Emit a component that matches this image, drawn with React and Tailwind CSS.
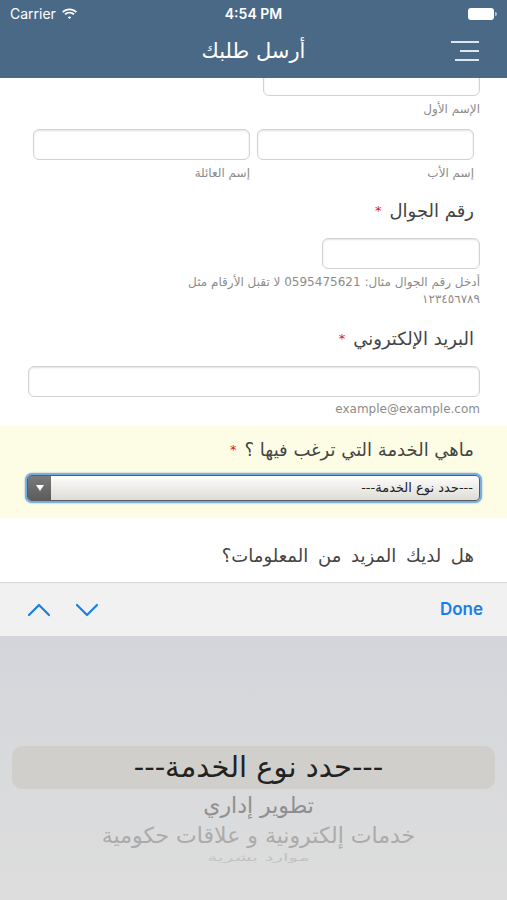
import React from 'react';

const arabic = { fontFamily: '"DejaVu Sans", sans-serif' };
const ui = { fontFamily: 'Inter, "Liberation Sans", "DejaVu Sans", sans-serif' };

function Field({ className = '' }) {
  return (
    <div className={`h-[31px] rounded-[6px] border border-[#d2d2d2] bg-white shadow-[inset_0_1px_2px_rgba(0,0,0,0.12)] ${className}`} />
  );
}

function Req() {
  return <span className="text-[#e0161b] text-[13px] mr-[8px] align-top">*</span>;
}

export default function App() {
  return (
    <div className="w-[507px] h-[900px] overflow-hidden bg-white relative" style={ui}>
      {/* status + nav */}
      <div className="bg-[#4a6987] text-white">
        <div className="h-[27px] flex items-center justify-between px-[10px] text-[14px]">
          <div className="flex items-center gap-[5px] w-[120px]">
            <span>Carrier</span>
            <svg width="17" height="12" viewBox="0 0 17 12" fill="white">
              <path d="M8.5 2.2c2.4 0 4.6.9 6.2 2.5l1.2-1.2C13.9 1.5 11.3.5 8.5.5S3.1 1.5 1.1 3.5l1.2 1.2C3.9 3.1 6.1 2.2 8.5 2.2z" />
              <path d="M8.5 5.4c1.5 0 2.9.6 3.9 1.6l1.2-1.2C12.3 4.5 10.5 3.7 8.5 3.7S4.7 4.5 3.4 5.8L4.6 7c1-1 2.4-1.6 3.9-1.6z" />
              <path d="M8.5 8.6c.7 0 1.3.3 1.7.7l-1.7 1.8-1.7-1.8c.4-.4 1-.7 1.7-.7z" />
            </svg>
          </div>
          <span className="font-semibold text-[14px]">4:54 PM</span>
          <div className="w-[120px] flex justify-end">
            <div className="flex items-center">
              <div className="w-[26px] h-[12px] rounded-[3px] bg-white" />
              <div className="w-[2px] h-[4px] bg-white/60 rounded-r-sm ml-[1px]" />
            </div>
          </div>
        </div>
        <div className="h-[51px] relative flex items-center justify-center">
          <span className="text-[21px] -mt-[2px]" style={arabic}>أرسل طلبك</span>
          <div className="absolute right-[28px] top-[14px] flex flex-col items-end gap-[7px]">
            <div className="w-[28px] h-[2px] bg-[#dbe6f0]" />
            <div className="w-[19px] h-[2px] bg-[#dbe6f0]" />
            <div className="w-[24px] h-[2px] bg-[#dbe6f0]" />
          </div>
        </div>
      </div>

      {/* form */}
      <div className="h-[504px] overflow-hidden" style={arabic}>
        <div className="-mt-[13px]" dir="rtl">
          <div className="pr-[27px]">
            <Field className="w-[217px]" />
            <div className="mt-[6px] text-[12px] leading-[15px] text-[#8c8c8c]">الإسم الأول</div>
          </div>
          <div className="pr-[33px] mt-[12px] flex gap-[7px]">
            <div className="w-[217px]">
              <Field />
              <div className="mt-[6px] text-[12px] leading-[15px] text-[#8c8c8c]">إسم الأب</div>
            </div>
            <div className="w-[217px]">
              <Field />
              <div className="mt-[6px] text-[12px] leading-[15px] text-[#8c8c8c]">إسم العائلة</div>
            </div>
          </div>

          <div className="pr-[33px] mt-[19px] text-[18px] leading-[22px] text-[#444]">
            رقم الجوال<Req />
          </div>
          <div className="pr-[27px] mt-[16px]">
            <Field className="w-[158px]" />
            <div className="mt-[5px] text-[12px] leading-[17px] text-[#8c8c8c]">
              أدخل رقم الجوال مثال: 0595475621 لا تقبل الأرقام مثل
              <br />
              ١٢٣٤٥٦٧٨٩
            </div>
          </div>

          <div className="pr-[33px] mt-[20px] text-[18px] leading-[22px] text-[#444]">
            البريد الإلكتروني<Req />
          </div>
          <div className="pr-[27px] mt-[16px]">
            <Field className="w-[452px]" />
            <div className="mt-[5px] text-[12px] leading-[15px] text-[#8c8c8c]" dir="ltr" style={{ textAlign: 'right' }}>
              example@example.com
            </div>
          </div>

          <div className="mt-[9px] h-[92px] bg-[#fdfde6] pt-[13px]">
            <div className="pr-[33px] text-[18px] leading-[22px] text-[#444]">
              ماهي الخدمة التي ترغب فيها ؟<Req />
            </div>
            <div className="mt-[12px] mx-[25px] h-[30px] rounded-[7px] bg-[#79addf] p-[2px] shadow-[0_0_2px_rgba(60,120,200,0.6)]">
              <div className="h-full rounded-[5px] overflow-hidden flex border border-[#5a5a5a]" dir="ltr">
                <div className="w-[23px] bg-gradient-to-b from-[#7a7a7a] to-[#5c5c5c] flex items-center justify-center">
                  <svg width="8" height="6" viewBox="0 0 8 6"><path d="M0 0h8L4 6z" fill="#fff" /></svg>
                </div>
                <div className="flex-1 bg-gradient-to-b from-[#fdfdfc] to-[#dedcd6] flex items-center justify-end pr-[6px] text-[13px] text-[#222]">
                  <span dir="rtl">---حدد نوع الخدمة---</span>
                </div>
              </div>
            </div>
          </div>

          <div className="pr-[33px] mt-[27px] text-[18px] leading-[22px] text-[#444] [word-spacing:4px]">
            هل لديك المزيد من المعلومات؟
          </div>
        </div>
      </div>

      {/* keyboard toolbar */}
      <div className="h-[54px] border-t border-[#d6d6d6] bg-[#f1f1f2] flex items-center justify-between pl-[27px] pr-[24px]">
        <div className="flex items-center gap-[24px]">
          <svg width="24" height="14" viewBox="0 0 24 14" fill="none" stroke="#1a7ee8" strokeWidth="2.2" strokeLinecap="round" strokeLinejoin="round">
            <path d="M2 12L12 2l10 10" />
          </svg>
          <svg width="24" height="14" viewBox="0 0 24 14" fill="none" stroke="#1a7ee8" strokeWidth="2.2" strokeLinecap="round" strokeLinejoin="round">
            <path d="M2 2l10 10L22 2" />
          </svg>
        </div>
        <span className="text-[17px] font-semibold text-[#1a7ee8]">Done</span>
      </div>

      {/* picker */}
      <div className="h-[265px] bg-gradient-to-b from-[#d3d5db] via-[#d9dadc] to-[#dddddd] pt-[110px] px-[12px]">
        <div className="h-[43px] rounded-[10px] bg-[#d0cfcb] flex items-center justify-center">
          <span className="text-[29px] text-[#222] ml-[10px]" style={arabic}>---حدد نوع الخدمة---</span>
        </div>
        <div className="flex flex-col items-center" style={arabic}>
          <div className="mt-[2px] text-[22px] leading-[30px] text-[#8f8f8f] ml-[10px]">تطوير إداري</div>
          <div className="mt-[1px] text-[22px] leading-[28px] text-[#ababab] ml-[10px]">خدمات إلكترونية و علاقات حكومية</div>
          <div className="-mt-[3px] text-[20px] leading-[20px] text-[#c2c2c2] scale-y-50 ml-[10px]">موارد بشرية</div>
        </div>
      </div>
    </div>
  );
}
